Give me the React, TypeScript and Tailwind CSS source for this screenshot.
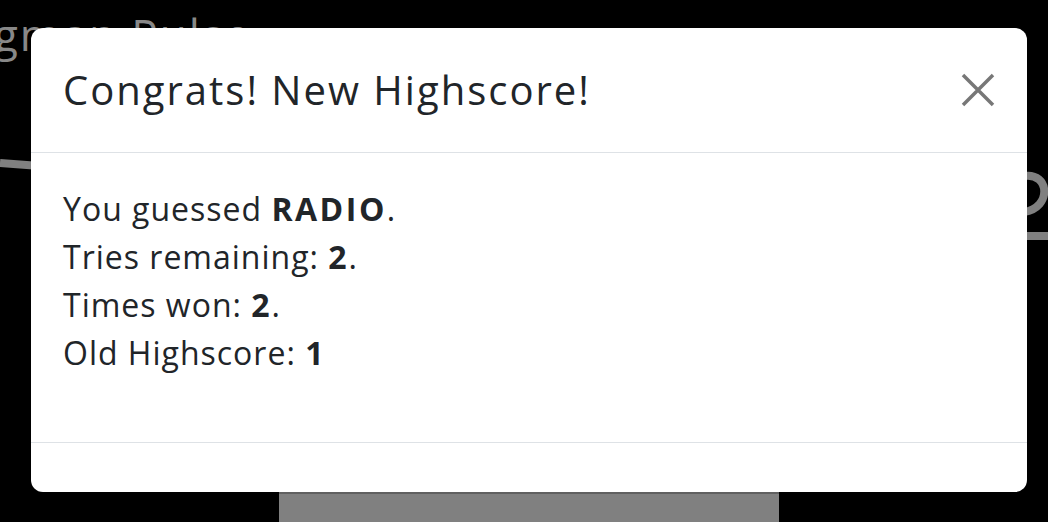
import React from 'react';

const font = { fontFamily: '"Open Sans", "Liberation Sans", sans-serif' };

export default function App() {
  return (
    <div className="relative w-[1048px] h-[522px] bg-black overflow-hidden" style={font}>
      {/* page behind the dimmed overlay */}
      <div className="flex flex-col h-full">
        <h1 className="-ml-[96px] mt-[4px] text-[44px] leading-[60px] text-[#888888] tracking-[2px]">Hangman Pulse</h1>
        <svg className="absolute inset-0" width="1048" height="522" viewBox="0 0 1048 522">
          <path d="M0 163 L40 166" stroke="#808080" strokeWidth="8" fill="none" />
          <path d="M1024 176 C1050 172 1052 208 1024 212" stroke="#808080" strokeWidth="8" fill="none" />
          <path d="M1024 236 L1052 236" stroke="#808080" strokeWidth="8" fill="none" />
        </svg>
        <div className="mt-auto ml-[279px] w-[500px] h-[30px] bg-[#808080] border-t-2 border-[#606060]" />
      </div>

      {/* modal */}
      <div className="absolute left-[31px] top-[28px] w-[996px] h-[464px] bg-white rounded-[12px] flex flex-col text-[#212529]">
        <div className="h-[125px] px-[32px] flex items-center justify-between border-b border-[#dee2e6]">
          <h2 className="text-[40px] leading-[60px] font-medium tracking-[2px]">Congrats! New Highscore!</h2>
          <svg width="34" height="34" viewBox="0 0 34 34">
            <path d="M2 2 L32 32 M32 2 L2 32" stroke="#777777" strokeWidth="3.5" />
          </svg>
        </div>
        <div className="h-[289px] px-[32px] pt-[32px] text-[32px] leading-[48px] tracking-[1px]">
          <p>You guessed <b className="font-bold tracking-[2.5px]">RADIO</b>.</p>
          <p>Tries remaining: <b className="font-bold tracking-[2px]">2</b>.</p>
          <p>Times won: <b className="font-bold tracking-[2px]">2</b>.</p>
          <p>Old Highscore: <b className="font-bold">1</b></p>
        </div>
        <div className="flex-1 border-t border-[#dee2e6]" />
      </div>
    </div>
  );
}
